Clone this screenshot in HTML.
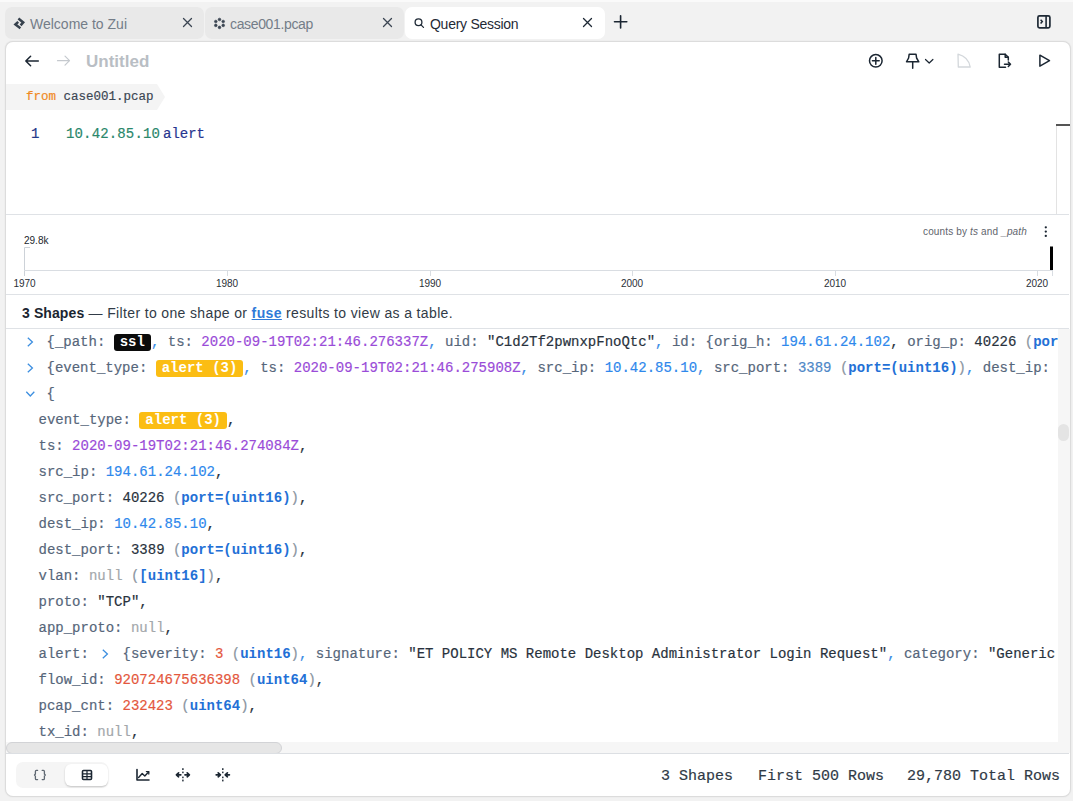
<!DOCTYPE html>
<html><head><meta charset="utf-8">
<style>
*{box-sizing:border-box;margin:0;padding:0}
html,body{width:1073px;height:801px;overflow:hidden;background:#f2f2f2;font-family:"Liberation Sans",sans-serif;color:#1f2733}
.a{position:absolute}
svg{position:absolute;overflow:visible}
.topband{left:0;top:0;width:1073px;height:2px;background:#fafafa}
.tab{top:7px;height:31.6px;border-radius:7px;background:#e9e9e9}
.lbl{position:absolute;top:9px;line-height:16px;font-size:14px;color:#747d88;white-space:pre}
.tab.active{background:#fff}
.tab.active .lbl{color:#1f2a36}
.panel{left:6px;top:42px;width:1064px;height:754px;background:#fff;border-radius:7px;box-shadow:0 0 0 1px #dcdcdc,0 0 2px 1px rgba(0,0,0,.07)}
.mono{font-family:"Liberation Mono",monospace;-webkit-text-stroke:0.18px currentColor}
.rows{left:6px;top:329px;width:1052px;height:413px;overflow:hidden}
.row{position:absolute;left:0;height:26px;line-height:26px;font-size:14px;white-space:pre;font-family:"Liberation Mono",monospace;color:#5a6a7c;-webkit-text-stroke:0.18px currentColor}
.row .ty,.row .badge{-webkit-text-stroke:0}
.k{color:#56667a}
.pc{color:#3a8ce6}
.dk{color:#29323d}
.ts{color:#9a4bd8}
.ip{color:#2e88ec}
.red{color:#e4573d}
.nul{color:#a3a7ab}
.par{color:#8a95a1}
.num2{color:#4d87c7}
.ty{color:#2370d6;font-weight:bold}
.badge{display:inline-block;height:17px;line-height:17px;padding:0 6px;border-radius:3px;font-weight:bold;color:#fff;vertical-align:0px}
.b-ssl{background:#0b0b0b}
.b-alert{background:#fbbd13}
.hline{height:1px;background:#dfe2e6}
.yr{position:absolute;top:278px;font-size:10px;line-height:12px;color:#2a2f36;width:40px;text-align:center}
</style></head><body>
<div class="a topband"></div>
<!-- tabs -->
<div class="a tab" style="left:5px;width:199px"><span class="lbl" style="left:25px">Welcome to Zui</span></div>
<div class="a tab" style="left:205px;width:199px"><span class="lbl" style="left:25px;letter-spacing:-0.35px">case001.pcap</span></div>
<div class="a tab active" style="left:405px;width:200px"><span class="lbl" style="left:25px;letter-spacing:-0.27px">Query Session</span></div>

<!-- tab icons -->
<svg style="left:0;top:0" width="1073" height="40">
  <!-- zui logo -->
  <g stroke="#36414d" stroke-width="2.5" fill="none" stroke-linecap="butt" stroke-linejoin="miter">
    <polyline points="18.4,18.6 23.2,22.4 20.6,25.4"/>
    <polyline points="18.2,21.9 15.4,24.5 20.4,28.3"/>
  </g>
  <!-- close X -->
  <g stroke="#3b4552" stroke-width="1.3" stroke-linecap="round">
    <path d="M183.5 18.5 L191.5 26.5 M191.5 18.5 L183.5 26.5"/>
    <path d="M383.5 18.5 L391.5 26.5 M391.5 18.5 L383.5 26.5"/>
    <path d="M583.5 18.5 L591.5 26.5 M591.5 18.5 L583.5 26.5" stroke="#1f2a36"/>
  </g>
  <!-- pool dots -->
  <g fill="#3a4552" stroke="#3a4552" stroke-width="0.6">
    <circle cx="219.5" cy="19.5" r="1.35"/><circle cx="219.5" cy="27.4" r="1.35"/>
    <circle cx="215.8" cy="21.5" r="1.35"/><circle cx="223.2" cy="21.5" r="1.35"/>
    <circle cx="215.8" cy="25.4" r="1.35"/><circle cx="223.2" cy="25.4" r="1.35"/>
  </g>
  <!-- search -->
  <g stroke="#1f2a36" stroke-width="1.3" fill="none" stroke-linecap="round">
    <circle cx="418.5" cy="22.3" r="3.4"/>
    <path d="M421 24.9 L423.5 27.4"/>
  </g>
  <!-- plus -->
  <g stroke="#1b2632" stroke-width="1.6" stroke-linecap="round">
    <path d="M620.6 15.8 V28 M614.5 21.8 H626.8"/>
  </g>
  <!-- sidebar toggle -->
  <g stroke="#1f2a36" fill="none">
    <rect x="1037.9" y="15.8" width="12" height="12" rx="1.6" stroke-width="1.7"/>
    <path d="M1046.1 16 V27.6" stroke-width="1.6"/>
    <path d="M1040.6 19.8 L1042.3 21.6 L1040.6 23.4" stroke-width="1.5"/>
  </g>
</svg>

<div class="a panel"></div>

<!-- header -->
<svg style="left:0;top:0" width="1073" height="90">
  <g stroke="#1b2632" stroke-width="1.5" fill="none" stroke-linecap="round" stroke-linejoin="round">
    <path d="M38.3 61 H25.8 M30.6 56.2 L25.8 61 L30.6 65.8"/>
  </g>
  <g stroke="#c5c9ce" stroke-width="1.2" fill="none" stroke-linecap="round" stroke-linejoin="round">
    <path d="M57.5 60.7 H69.5 M65 56.2 L69.5 60.7 L65 65.2"/>
  </g>
  <!-- circle plus -->
  <g stroke="#1b2632" stroke-width="1.5" fill="none" stroke-linecap="round">
    <circle cx="875.8" cy="60.8" r="6.3"/>
    <path d="M875.8 57.4 V64.2 M872.4 60.8 H879.2"/>
  </g>
  <!-- pin -->
  <g stroke="#1b2632" stroke-width="1.5" fill="none" stroke-linecap="round" stroke-linejoin="round">
    <path d="M909.2 54.2 H916 L916.6 58 L918.8 61.8 H906.5 L908.6 58 Z"/>
    <path d="M912.7 62 V68.2"/>
    <path d="M925.5 59.5 L929.2 63 L932.9 59.5" stroke-width="1.2"/>
  </g>
  <!-- disabled -->
  <g stroke="#d3d7db" stroke-width="1.3" fill="none" stroke-linejoin="round">
    <path d="M958 54.2 Q968.5 57 970.2 67 H958.3 Z"/>
  </g>
  <!-- export -->
  <g stroke="#1b2632" stroke-width="1.5" fill="none" stroke-linecap="round" stroke-linejoin="round">
    <path d="M1005.5 67.3 H999.3 V54.2 H1005.2 L1008.3 57.3 V60"/>
    <path d="M1005.2 54.2 V57.3 H1008.3"/>
    <path d="M1004.5 64.3 H1010.5 M1008.3 62 L1010.5 64.3 L1008.3 66.5"/>
  </g>
  <!-- play -->
  <g stroke="#1b2632" stroke-width="1.5" fill="none" stroke-linejoin="round">
    <path d="M1039.9 55.2 L1049.5 60.7 L1039.9 66.2 Z"/>
  </g>
</svg>
<div class="a" style="left:86px;top:53px;font-size:17px;line-height:18px;font-weight:bold;color:#b9bec4">Untitled</div>

<!-- pipe block -->
<svg style="left:0;top:0" width="200" height="120">
  <path d="M6 84 H157 L165 97 L157 110 H6 Z" fill="#f4f4f4"/>
</svg>
<div class="a mono" style="left:26px;top:90px;font-size:12.5px;line-height:15px;white-space:pre;color:#3b4653"><span style="color:#f0891f">from</span> case001.pcap</div>

<!-- editor -->
<div class="a mono" style="left:31px;top:126px;font-size:14px;line-height:16px;color:#23398a">1</div>
<div class="a mono" style="left:66px;top:126px;font-size:14px;line-height:16px;color:#2a876b;letter-spacing:0.15px">10.42.85.10</div>
<div class="a mono" style="left:163px;top:126px;font-size:14px;line-height:16px;color:#27348f">alert</div>
<div class="a" style="left:1056px;top:124px;width:1px;height:90px;background:#e3e3e3"></div>
<div class="a" style="left:1056px;top:124px;width:14px;height:2px;background:#555"></div>
<div class="a hline" style="left:6px;top:214px;width:1063px"></div>

<!-- histogram -->
<div class="a" style="left:24px;top:235px;font-size:10px;line-height:12px;color:#22272d">29.8k</div>
<div class="a" style="left:923px;top:226px;font-size:10px;line-height:12px;color:#5f656d;letter-spacing:0.15px;white-space:pre">counts by <i>ts</i> and <i>_path</i></div>
<svg style="left:0;top:0" width="1073" height="300">
  <g fill="#1b2632"><circle cx="1045.8" cy="227.3" r="1.15"/><circle cx="1045.8" cy="231.6" r="1.15"/><circle cx="1045.8" cy="235.9" r="1.15"/></g>
  <path d="M24.5 247.5 H30 M24.5 247.5 V276" stroke="#cdd2d8" stroke-width="1" fill="none"/>
  <path d="M24 270.5 H1053" stroke="#d9dde2" stroke-width="1"/>
  <g stroke="#d9dde2" stroke-width="1">
    <path d="M227.5 270.5 V276"/><path d="M430.5 270.5 V276"/><path d="M632.5 270.5 V276"/><path d="M835.5 270.5 V276"/><path d="M1037.5 270.5 V276"/><path d="M1052.5 270.5 V276"/>
  </g>
  <rect x="1050" y="246.5" width="3" height="23.5" fill="#000"/>
</svg>
<div class="yr" style="left:4.5px">1970</div>
<div class="yr" style="left:207px">1980</div>
<div class="yr" style="left:410px">1990</div>
<div class="yr" style="left:612px">2000</div>
<div class="yr" style="left:815px">2010</div>
<div class="yr" style="left:1017px">2020</div>
<div class="a hline" style="left:6px;top:294px;width:1063px"></div>

<!-- shapes bar -->
<div class="a" style="left:22px;top:305px;font-size:14px;line-height:16px;white-space:pre;color:#313b47;letter-spacing:0.36px"><b style="color:#1b2530;letter-spacing:0.1px">3 Shapes</b> — Filter to one shape or <b style="color:#2f7ad8;text-decoration:underline">fuse</b> results to view as a table.</div>
<div class="a hline" style="left:6px;top:328px;width:1063px"></div>

<!-- rows -->
<div class="a rows">
<div class="row" style="top:0px;left:0"><svg width="10" height="10" style="left:20px;top:8px"><path d="M1.8 0.8 L6.4 5 L1.8 9.2" stroke="#3d8fe0" stroke-width="1.3" fill="none"/></svg><span style="position:absolute;left:40.5px;top:0"><span class="k">{_path: </span><span class="badge b-ssl">ssl</span><span class="pc">, </span><span class="k">ts: </span><span class="ts">2020-09-19T02:21:46.276337Z</span><span class="pc">, </span><span class="k">uid: </span><span class="dk">"C1d2Tf2pwnxpFnoQtc"</span><span class="pc">, </span><span class="k">id: {orig_h: </span><span class="ip">194.61.24.102</span><span class="dk">, </span><span class="k">orig_p: </span><span class="dk">40226 </span><span class="par">(</span><span class="ty">port=(uint16)</span><span class="par">)</span><span class="dk">, resp_h: 10.42.85.10</span></span></div>
<div class="row" style="top:26px;left:0"><svg width="10" height="10" style="left:20px;top:8px"><path d="M1.8 0.8 L6.4 5 L1.8 9.2" stroke="#3d8fe0" stroke-width="1.3" fill="none"/></svg><span style="position:absolute;left:40.5px;top:0"><span class="k">{event_type: </span><span class="badge b-alert">alert (3)</span><span class="pc">, </span><span class="k">ts: </span><span class="ts">2020-09-19T02:21:46.275908Z</span><span class="pc">, </span><span class="k">src_ip: </span><span class="ip">10.42.85.10</span><span class="pc">, </span><span class="k">src_port: </span><span class="num2">3389 </span><span class="par">(</span><span class="ty">port=(uint16)</span><span class="par">)</span><span class="pc">, </span><span class="k">dest_ip: </span><span class="ip">194.61.24.102</span></span></div>
<div class="row" style="top:52px;left:0"><svg width="10" height="8" style="left:20px;top:10px"><path d="M0.3 0.8 L4.3 5 L8.3 0.8" stroke="#3d8fe0" stroke-width="1.3" fill="none"/></svg><span style="position:absolute;left:40.5px;top:0"><span class="k">{</span></span></div>
<div class="row" style="top:78px;left:0"><span style="position:absolute;left:32.5px;top:0"><span class="k">event_type: </span><span class="badge b-alert">alert (3)</span><span class="dk">,</span></span></div>
<div class="row" style="top:104px;left:0"><span style="position:absolute;left:32.5px;top:0"><span class="k">ts: </span><span class="ts">2020-09-19T02:21:46.274084Z</span><span class="dk">,</span></span></div>
<div class="row" style="top:130px;left:0"><span style="position:absolute;left:32.5px;top:0"><span class="k">src_ip: </span><span class="ip">194.61.24.102</span><span class="dk">,</span></span></div>
<div class="row" style="top:156px;left:0"><span style="position:absolute;left:32.5px;top:0"><span class="k">src_port: </span><span class="dk">40226 </span><span class="par">(</span><span class="ty">port=(uint16)</span><span class="par">)</span><span class="dk">,</span></span></div>
<div class="row" style="top:182px;left:0"><span style="position:absolute;left:32.5px;top:0"><span class="k">dest_ip: </span><span class="ip">10.42.85.10</span><span class="dk">,</span></span></div>
<div class="row" style="top:208px;left:0"><span style="position:absolute;left:32.5px;top:0"><span class="k">dest_port: </span><span class="dk">3389 </span><span class="par">(</span><span class="ty">port=(uint16)</span><span class="par">)</span><span class="dk">,</span></span></div>
<div class="row" style="top:234px;left:0"><span style="position:absolute;left:32.5px;top:0"><span class="k">vlan: </span><span class="nul">null </span><span class="par">(</span><span class="ty">[uint16]</span><span class="par">)</span><span class="dk">,</span></span></div>
<div class="row" style="top:260px;left:0"><span style="position:absolute;left:32.5px;top:0"><span class="k">proto: </span><span class="dk">"TCP"</span><span class="dk">,</span></span></div>
<div class="row" style="top:286px;left:0"><span style="position:absolute;left:32.5px;top:0"><span class="k">app_proto: </span><span class="nul">null</span><span class="dk">,</span></span></div>
<div class="row" style="top:312px;left:0"><svg width="10" height="10" style="left:95px;top:8px"><path d="M1.8 0.8 L6.4 5 L1.8 9.2" stroke="#3d8fe0" stroke-width="1.3" fill="none"/></svg><span style="position:absolute;left:32.5px;top:0"><span class="k">alert: </span><span class="chv">   </span><span class="k">{severity: </span><span class="red">3 </span><span class="par">(</span><span class="ty">uint16</span><span class="par">)</span><span class="pc">, </span><span class="k">signature: </span><span class="dk">"ET POLICY MS Remote Desktop Administrator Login Request"</span><span class="pc">, </span><span class="k">category: </span><span class="dk">"Generic Protocol Command Decode"</span></span></div>
<div class="row" style="top:338px;left:0"><span style="position:absolute;left:32.5px;top:0"><span class="k">flow_id: </span><span class="red">920724675636398 </span><span class="par">(</span><span class="ty">uint64</span><span class="par">)</span><span class="dk">,</span></span></div>
<div class="row" style="top:364px;left:0"><span style="position:absolute;left:32.5px;top:0"><span class="k">pcap_cnt: </span><span class="red">232423 </span><span class="par">(</span><span class="ty">uint64</span><span class="par">)</span><span class="dk">,</span></span></div>
<div class="row" style="top:390px;left:0"><span style="position:absolute;left:32.5px;top:0"><span class="k">tx_id: </span><span class="nul">null</span><span class="dk">,</span></span></div>
<div class="row" style="top:416px;left:0"><span style="position:absolute;left:32.5px;top:0"><span class="k">tx_guessed: </span><span class="nul">null</span><span class="dk">,</span></span></div>
</div>

<!-- vertical scrollbar -->
<div class="a" style="left:1058px;top:329px;width:12px;height:413px;background:#f6f6f6"></div>
<div class="a" style="left:1058px;top:424px;width:11px;height:17px;background:#e4e4e4;border-radius:6px"></div>
<!-- horizontal scrollbar -->
<div class="a" style="left:6px;top:742px;width:1064px;height:11px;background:#f6f6f6"></div>
<div class="a" style="left:6px;top:742px;width:276px;height:12px;background:#e6e6e6;border:1px solid #d2d3d6;border-radius:6px"></div>
<div class="a hline" style="left:6px;top:753px;width:1063px;background:#dcdfe3"></div>

<!-- footer -->
<div class="a" style="left:16px;top:762px;width:92px;height:26px;border-radius:7px;background:#f5f5f5"></div>
<div class="a" style="left:65px;top:764px;width:43px;height:22px;border-radius:6px;background:#fff;box-shadow:0 1px 2px rgba(0,0,0,.2)"></div>
<svg style="left:0;top:0" width="300" height="801">
  <g stroke="#5f6872" stroke-width="1.3" fill="none" stroke-linecap="round" stroke-linejoin="round">
    <path d="M37.6 770.4 H36.4 Q35.4 770.4 35.4 771.6 V774 L34.5 775 L35.4 776 V778.4 Q35.4 779.6 36.4 779.6 H37.6"/>
    <path d="M42.2 770.4 H43.4 Q44.4 770.4 44.4 771.6 V774 L45.3 775 L44.4 776 V778.4 Q44.4 779.6 43.4 779.6 H42.2"/>
  </g>
  <g stroke="#1b2632" fill="none">
    <rect x="82.5" y="770.5" width="9" height="9" rx="1" stroke-width="1.6"/>
    <path d="M83 773.8 H91 M83 776.6 H91 M87 771 V779" stroke-width="1.2"/>
  </g>
  <g stroke="#1b2632" fill="none" stroke-linecap="round" stroke-linejoin="round">
    <path d="M137 769.5 V780 H149" stroke-width="1.6"/>
    <path d="M138.6 777.4 L142.2 773.6 L144.8 776 L148.6 772" stroke-width="1.4"/>
    <path d="M146.4 771.6 H148.8 V774" stroke-width="1.3"/>
  </g>
  <g stroke="#1b2632" fill="none" stroke-linecap="round" stroke-linejoin="round" stroke-width="1.7">
    <path d="M180.8 774.8 H177 M178.6 772.8 L176.4 774.8 L178.6 776.8"/>
    <path d="M185 774.8 H188.8 M187.2 772.8 L189.4 774.8 L187.2 776.8"/>
    <path d="M216.2 774.8 H220 M218.2 772.8 L220.4 774.8 L218.2 776.8"/>
    <path d="M229.4 774.8 H225.6 M227.4 772.8 L225.2 774.8 L227.4 776.8"/>
  </g>
  <g fill="#1b2632">
    <rect x="182.2" y="768.2" width="1.4" height="1.8"/><rect x="182.2" y="771.6" width="1.4" height="1.6"/><rect x="182.2" y="776.6" width="1.4" height="1.6"/><rect x="182.2" y="779.6" width="1.4" height="1.8"/>
    <rect x="222.1" y="768.2" width="1.4" height="1.8"/><rect x="222.1" y="771.6" width="1.4" height="1.6"/><rect x="222.1" y="776.6" width="1.4" height="1.6"/><rect x="222.1" y="779.6" width="1.4" height="1.8"/>
  </g>
</svg>
<div class="a mono" style="left:661px;top:768px;font-size:15px;line-height:18px;white-space:pre;color:#303a46">3 Shapes</div><div class="a mono" style="left:758px;top:768px;font-size:15px;line-height:18px;white-space:pre;color:#303a46">First 500 Rows</div><div class="a mono" style="left:907px;top:768px;font-size:15px;line-height:18px;white-space:pre;color:#303a46">29,780 Total Rows</div>
</body></html>
